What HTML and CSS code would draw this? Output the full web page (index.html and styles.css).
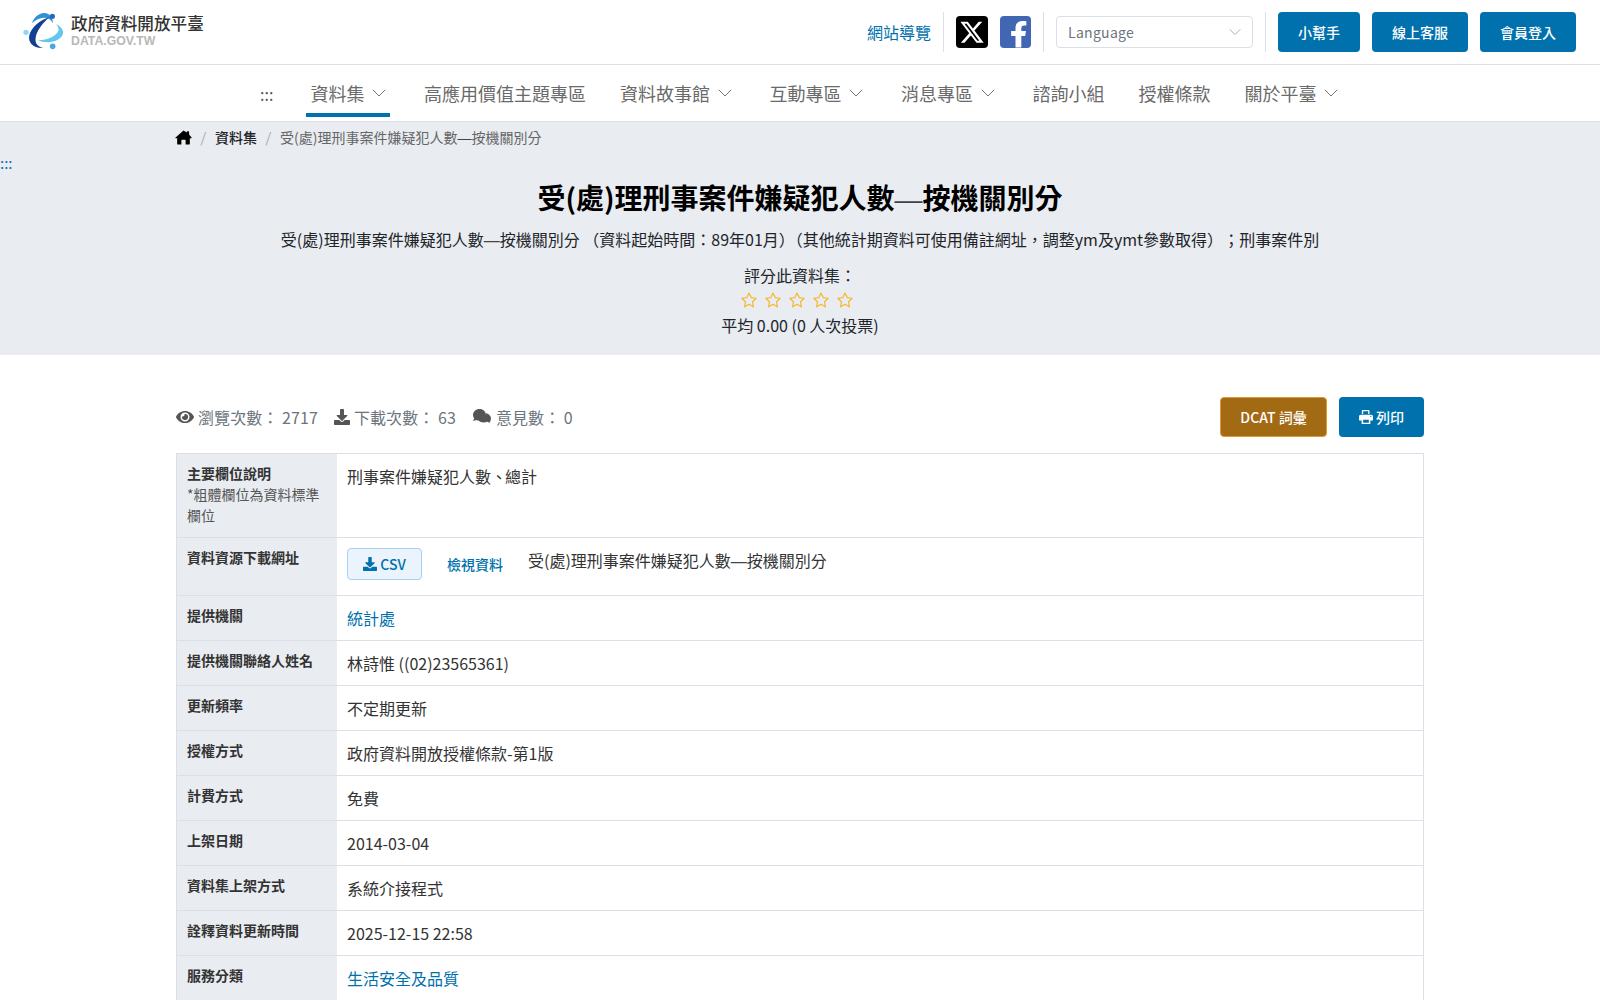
FILE: index.html
```html
<!DOCTYPE html>
<html lang="zh-Hant">
<head>
<meta charset="utf-8">
<title>受(處)理刑事案件嫌疑犯人數—按機關別分</title>
<link rel="stylesheet" href="styles.css">
</head>
<body>
<svg class="sprites" width="0" height="0" aria-hidden="true">
  <symbol id="chev" viewBox="0 0 14 14"><path d="M.8 3.800 7 10l6.200-6.200" fill="none" stroke="currentColor" stroke-width="1"/></symbol>
  <symbol id="dl" viewBox="0 0 512 512"><path fill="currentColor" d="M216 0h80c13 0 24 11 24 24v168h88c18 0 27 21 14 34L270 378c-8 8-20 8-28 0L90 226c-13-13-4-34 14-34h88V24c0-13 11-24 24-24zm296 376v112c0 13-11 24-24 24H24c-13 0-24-11-24-24V376c0-13 11-24 24-24h147l49 49c20 20 52 20 72 0l49-49h147c13 0 24 11 24 24z"/></symbol>
  <symbol id="star" viewBox="0 0 24 24"><path fill="none" stroke="#f5b82e" stroke-width="1.6" stroke-linejoin="round" d="m12 2.600 2.900 6.200 6.700.9-4.900 4.700 1.200 6.700-5.900-3.300-5.900 3.300 1.200-6.700-4.900-4.700 6.700-.9z"/></symbol>
</svg>
<header class="topbar">
  <a class="logo" href="#">
    <svg class="logo-mark" viewBox="0 0 150 144" width="50" height="48">
      <path d="M54 96c22 12 58 8 72-12 8-12 2-26-18-36 9 11 10 19 4 26-12 14-36 24-58 22z" fill="#63c6ea"/>
      <path d="M36 46C44 22 68 8 86 19c9 6 12 15 13 27-6-11-14-16-25-17-13-1-26 6-38 17z" fill="#2f93d8"/>
      <path d="M88 28C60 36 34 58 28 82c-5 22 12 40 42 38-16-4-26-14-23-31 3-20 20-43 41-61z" fill="#123f92"/>
      <circle cx="97" cy="25" r="8" fill="#2c69b8"/>
      <circle cx="18" cy="73" r="8" fill="#92d6f1"/>
      <circle cx="98" cy="115" r="8.500" fill="#4aa8e2"/>
    </svg>
    <span class="logo-text">
      <strong>政府資料開放平臺</strong>
      <em>DATA.GOV.TW</em>
    </span>
  </a>
  <div class="tools">
    <a class="sitemap" href="#">網站導覽</a>
    <span class="divider"></span>
    <a class="social x" href="#" aria-label="X">
      <svg viewBox="0 0 24 24" width="26" height="26"><path fill="#fff" d="M18.200 2.500h3.300l-7.200 8.200L22.800 22h-6.600l-5.200-6.800L5 22H1.700l7.700-8.800L1.300 2.500h6.800l4.700 6.200zm-1.200 17.500h1.800L7 4.400H5z"/></svg>
    </a>
    <a class="social fb" href="#" aria-label="Facebook">
      <svg viewBox="0 0 32 32" width="32" height="32"><path fill="#fff" d="M22 32V20h4l.8-5H22v-3c0-1.600.8-2.800 3-2.800h2.200V5c-1-.2-2.500-.4-4-.4-4.500 0-7.200 2.600-7.200 7.200V15h-4.500v5H16v12z"/></svg>
    </a>
    <span class="divider"></span>
    <div class="lang"><span>Language</span><svg class="chev-sm"><use href="#chev"/></svg></div>
    <span class="divider"></span>
    <a class="btn" href="#">小幫手</a>
    <a class="btn" href="#">線上客服</a>
    <a class="btn" href="#">會員登入</a>
  </div>
</header>
<nav class="mainnav">
  <a class="acc" href="#">:::</a>
  <a class="item drop active" href="#">資料集<svg class="chev"><use href="#chev"/></svg></a>
  <a class="item" href="#">高應用價值主題專區</a>
  <a class="item drop" href="#">資料故事館<svg class="chev"><use href="#chev"/></svg></a>
  <a class="item drop" href="#">互動專區<svg class="chev"><use href="#chev"/></svg></a>
  <a class="item drop" href="#">消息專區<svg class="chev"><use href="#chev"/></svg></a>
  <a class="item" href="#">諮詢小組</a>
  <a class="item" href="#">授權條款</a>
  <a class="item drop" href="#">關於平臺<svg class="chev"><use href="#chev"/></svg></a>
</nav>
<section class="hero">
  <div class="crumbs">
    <svg viewBox="0 0 576 512" width="17" height="15"><path fill="#000" d="M288 20 8 262c-8 7-3 20 8 20h56v198c0 9 7 16 16 16h128V352c0-9 7-16 16-16h112c9 0 16 7 16 16v144h128c9 0 16-7 16-16V282h56c11 0 16-13 8-20L480 154V56c0-9-7-16-16-16h-48c-9 0-16 7-16 16v30z"/></svg>
    <span class="sep">/</span><a href="#">資料集</a><span class="sep">/</span><span class="cur">受(處)理刑事案件嫌疑犯人數<span class="dash">—</span>按機關別分</span>
  </div>
  <a class="acc-c" href="#">:::</a>
  <h1>受(處)理刑事案件嫌疑犯人數<span class="dash">—</span>按機關別分</h1>
  <p class="desc">受(處)理刑事案件嫌疑犯人數<span class="dash">—</span>按機關別分 （資料起始時間：89年01月）（其他統計期資料可使用備註網址，調整ym及ymt參數取得）<span class="semi">；</span>刑事案件別</p>
  <p class="rate-label">評分此資料集：</p>
  <div class="stars">
    <svg><use href="#star"/></svg><svg><use href="#star"/></svg><svg><use href="#star"/></svg><svg><use href="#star"/></svg><svg><use href="#star"/></svg>
  </div>
  <p class="avg">平均 0.00 (0 人次投票)</p>
</section>
<main class="content">
  <div class="statbar">
    <div class="stats">
      <span class="stat"><svg viewBox="0 0 576 512" width="18" height="16"><path fill="currentColor" d="M572 241C518 136 411 64 288 64S58 136 4 241a32 32 0 0 0 0 30c54 105 161 177 284 177s230-72 284-177a32 32 0 0 0 0-30zM288 400a144 144 0 1 1 0-288 144 144 0 0 1 0 288zm0-240a95 95 0 0 0-25 4 48 48 0 0 1-67 67 96 96 0 1 0 92-71z"/></svg>瀏覽次數： 2717</span>
      <span class="stat"><svg width="16" height="16"><use href="#dl"/></svg>下載次數： 63</span>
      <span class="stat"><svg viewBox="0 0 576 512" width="20" height="16"><path fill="currentColor" d="M416 192C416 86 323 0 208 0S0 86 0 192c0 41 14 79 38 110-13 30-35 54-35 54-3 3-4 8-2 12s6 7 10 7c37 0 67-12 89-25 33 16 70 25 108 25 115 0 208-86 208-183zm122 220c24-31 38-69 38-108 0-80-63-149-153-177 1 5 1 10 1 15 0 106-108 192-240 192-11 0-21-1-31-2 31 57 104 98 191 98 38 0 75-9 108-25 22 13 52 25 89 25 4 0 8-3 10-7s1-9-2-12c0 0-22-24-35-54z"/></svg>意見數： 0</span>
    </div>
    <div class="actions">
      <a class="btn gold" href="#">DCAT 詞彙</a>
      <a class="btn print" href="#"><svg viewBox="0 0 512 512" width="14" height="14"><path fill="#fff" d="M128 0h232l24 24v120h-48V48H152v96h-48V24zM64 176h384c35 0 64 29 64 64v128c0 9-7 16-16 16h-80v128H96V384H16c-9 0-16-7-16-16V240c0-35 29-64 64-64zm88 176v112h208V352zm280-96a24 24 0 1 0 0-48 24 24 0 0 0 0 48z"/></svg>列印</a>
    </div>
  </div>
  <div class="table">
    <div class="row tall"><div class="th"><b>主要欄位說明</b><small>*粗體欄位為資料標準欄位</small></div><div class="td">刑事案件嫌疑犯人數<span class="tight">、</span>總計</div></div>
    <div class="row res"><div class="th"><b>資料資源下載網址</b></div><div class="td res-cell">
      <a class="csv" href="#"><svg width="14" height="14"><use href="#dl"/></svg>CSV</a>
      <a class="view" href="#">檢視資料</a>
      <span class="res-name">受(處)理刑事案件嫌疑犯人數<span class="dash">—</span>按機關別分</span>
    </div></div>
    <div class="row"><div class="th"><b>提供機關</b></div><div class="td"><a href="#">統計處</a></div></div>
    <div class="row"><div class="th"><b>提供機關聯絡人姓名</b></div><div class="td">林詩惟 ((02)23565361)</div></div>
    <div class="row"><div class="th"><b>更新頻率</b></div><div class="td">不定期更新</div></div>
    <div class="row"><div class="th"><b>授權方式</b></div><div class="td">政府資料開放授權條款-第1版</div></div>
    <div class="row"><div class="th"><b>計費方式</b></div><div class="td">免費</div></div>
    <div class="row"><div class="th"><b>上架日期</b></div><div class="td">2014-03-04</div></div>
    <div class="row"><div class="th"><b>資料集上架方式</b></div><div class="td">系統介接程式</div></div>
    <div class="row"><div class="th"><b>詮釋資料更新時間</b></div><div class="td">2025-12-15 22:58</div></div>
    <div class="row"><div class="th"><b>服務分類</b></div><div class="td"><a href="#">生活安全及品質</a></div></div>
  </div>
</main>
</body>
</html>
```
FILE: styles.css
```css
* { box-sizing: border-box; }
html, body { margin: 0; height: 1000px; overflow: hidden; }
body { font-family: "Noto Sans CJK TC", "Noto Sans", sans-serif; color: #212529; background: #fff; font-size: 16px; }
a { text-decoration: none; color: #0071ad; }
p, h1 { margin: 0; }
.sprites { position: absolute; }
.dash { font-family: "Liberation Sans", sans-serif; font-weight: 400; color: #444; line-height: 0; }
.semi { margin-left: 8px; }
.tight { letter-spacing: -2px; }

.topbar { height: 65px; border-bottom: 1px solid #dcdfe8; display: flex; align-items: center; justify-content: space-between; padding: 0 24px 0 20px; }
.logo { display: flex; align-items: center; gap: 1px; }
.logo-text { display: flex; flex-direction: column; margin-top: -4px; }
.logo-text strong { font-size: 16.600px; font-weight: 500; color: #333; line-height: 20px; white-space: nowrap; }
.logo-text em { font-family: "Liberation Sans", sans-serif; font-style: normal; font-weight: 700; font-size: 12.300px; color: #b8b8b8; line-height: 13px; margin-top: 2px; }
.tools { display: flex; align-items: center; height: 40px; margin-top: -1px; }
.sitemap { font-size: 16px; margin-right: 12px; }
.divider { width: 1px; height: 40px; background: #dcdfe8; }
.social { height: 32px; border-radius: 4px; display: flex; align-items: center; justify-content: center; overflow: hidden; flex: none; }
.x { width: 32px; background: #000; margin-left: 12px; }
.fb { width: 31px; background: #4267b2; margin: 0 12px; }
.lang { width: 197px; height: 32px; border: 1px solid #dcdfe8; border-radius: 4px; margin: 0 12px; padding: 0 11px; display: flex; align-items: center; justify-content: space-between; color: #6c757d; font-size: 14px; letter-spacing: .3px; }
.chev-sm { width: 12px; height: 12px; color: #9aa0a8; }
.btn { background: #0071ad; color: #fff; font-size: 14px; font-weight: 500; height: 40px; border-radius: 4px; display: flex; align-items: center; justify-content: center; padding: 0 20px; margin-left: 12px; }

.mainnav { height: 57px; border-bottom: 1px solid #dcdfe8; display: flex; justify-content: center; align-items: stretch; padding-left: 19px; }
.acc { font-size: 16px; color: #555; display: flex; align-items: center; margin-right: 20px; padding-top: 1px; }
.item { font-size: 18px; color: #6a6a6a; display: flex; align-items: center; gap: 8px; padding: 8px 4px 0; margin: 0 13px 4px; border-bottom: 4px solid transparent; }
.item.drop { margin-right: 16.500px; }
.item.active { border-bottom-color: #0071ad; }
.chev { width: 14px; height: 14px; color: #777; }

.hero { background: #e9ecf1; height: 233px; text-align: center; }
.crumbs { display: flex; align-items: center; height: 30px; padding-left: 175px; font-size: 14px; color: #666; }
.crumbs a { color: #212529; font-weight: 500; }
.sep { margin: 0 9px 0 8.500px; color: #8a929a; font-weight: 300; }
.acc-c { display: block; text-align: left; font-size: 15px; line-height: 16px; height: 16px; margin-top: 3px; }
h1 { font-size: 28px; font-weight: 700; color: #000; line-height: 40px; margin-top: 6px; }
.desc { line-height: 24px; margin-top: 10px; }
.rate-label { line-height: 24px; margin-top: 12px; }
.stars { display: flex; justify-content: center; gap: 6px; height: 24px; align-items: center; margin-top: 1px; padding-right: 6px; }
.stars svg { width: 18px; height: 18px; }
.avg { line-height: 24px; margin-top: 1px; }

.content { width: 1248px; margin-left: 176px; }
.statbar { display: flex; justify-content: space-between; align-items: center; height: 40px; margin-top: 42px; margin-bottom: 16px; }
.stats { display: flex; gap: 16px; color: #6c757d; letter-spacing: .08px; }
.stat { display: flex; align-items: center; gap: 4px; }
.stat svg { color: #555; }
.actions { display: flex; }
.btn.gold { background: #a36a14; border: 1px solid #dd9933; width: 107px; padding: 0; margin: 0; }
.btn.print { width: 85px; padding: 0; gap: 3px; margin-left: 12px; }

.table { border: 1px solid #dcdfe8; border-bottom: 0; }
.row { display: grid; grid-template-columns: 160px 1fr; height: 45px; border-bottom: 1px solid #dcdfe8; }
.row.tall { height: 84px; }
.row.res { height: 58px; }
.th { background: #e9ecf1; padding: 9px 10px; font-size: 14px; line-height: 21px; color: #333; }
.th b { display: block; font-weight: 700; }
.th small { display: block; font-size: 14px; color: #555; }
.td { padding: 10px; line-height: 24px; color: #333; }
.res-cell { display: flex; align-items: flex-start; }
.csv { width: 75px; height: 32px; background: #ebf4fd; border: 1px solid #a8d0f5; border-radius: 4px; display: flex; align-items: center; justify-content: center; gap: 3px; font-size: 14px; font-weight: 500; }
.view { font-size: 14px; font-weight: 500; margin-left: 25px; line-height: 32px; }
.res-name { margin-left: 25px; }
```
